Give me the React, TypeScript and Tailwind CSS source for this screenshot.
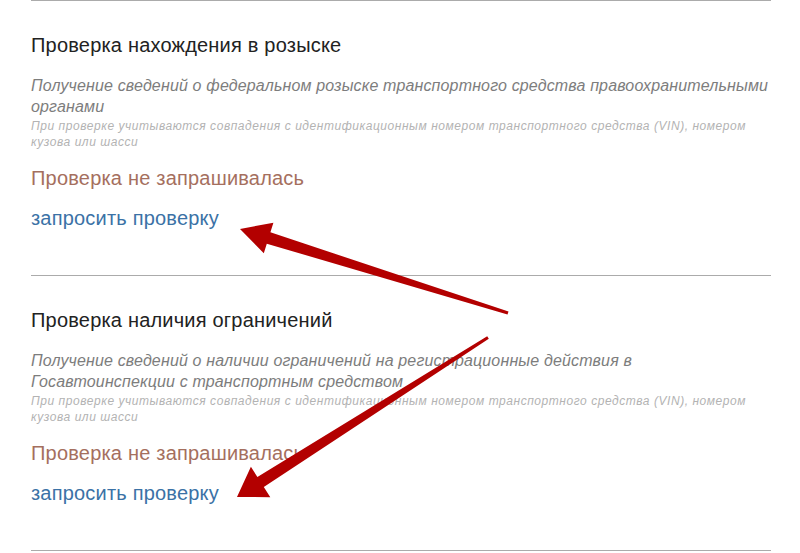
import React from "react";

interface CheckItem {
  title: string;
  description: string;
}

const CHECKS: CheckItem[] = [
  {
    title: "Проверка нахождения в розыске",
    description:
      "Получение сведений о федеральном розыске транспортного средства правоохранительными органами",
  },
  {
    title: "Проверка наличия ограничений",
    description:
      "Получение сведений о наличии ограничений на регистрационные действия в Госавтоинспекции с транспортным средством",
  },
];

const NOTE =
  "При проверке учитываются совпадения с идентификационным номером транспортного средства (VIN), номером кузова или шасси";

function CheckSection({ item }: { item: CheckItem }) {
  return (
    <section className="border-t border-[#ababab] pt-[32px] pb-[45px]">
      <h3 className="text-[20px] leading-[24px] tracking-[0.2px] text-[#222]">{item.title}</h3>
      <p className="mt-[18px] text-[16px] leading-[21px] tracking-[0.15px] italic text-[#7d7d7d]">
        {item.description}
      </p>
      <p className="mt-[1px] text-[12px] leading-[16px] tracking-[0.55px] italic text-[#b3b3b3]">
        {NOTE}
      </p>
      <div className="mt-[16px] text-[20px] leading-[24px] tracking-[0.2px] text-[#a56f5e]">
        Проверка не запрашивалась
      </div>
      <a
        className="mt-[16px] block text-[20px] leading-[24px] tracking-[0.2px] text-[#3b72a6]"
        href="#"
      >
        запросить проверку
      </a>
    </section>
  );
}

export default function App() {
  return (
    <div
      className="relative h-[553px] w-[800px] overflow-hidden bg-white"
      style={{ fontFamily: '"Liberation Sans", Arial, sans-serif' }}
    >
      <div className="ml-[31px] w-[740px]">
        {CHECKS.map((item) => (
          <CheckSection key={item.title} item={item} />
        ))}
        <div className="border-t border-[#ababab]" />
      </div>

      {/* red annotation arrows */}
      <svg className="pointer-events-none absolute left-0 top-0" width="800" height="553">
        <polygon
          fill="#b30000"
          points="240,229 273.4,222.7 270.4,232.3 508.5,311.6 507.5,314.4 266.8,243.7 263.8,253.3"
        />
        <polygon
          fill="#b30000"
          points="237,497 250.9,466.8 257.4,477 487.2,336.2 488.8,338.8 263.8,487 270.3,497.2"
        />
      </svg>
    </div>
  );
}
